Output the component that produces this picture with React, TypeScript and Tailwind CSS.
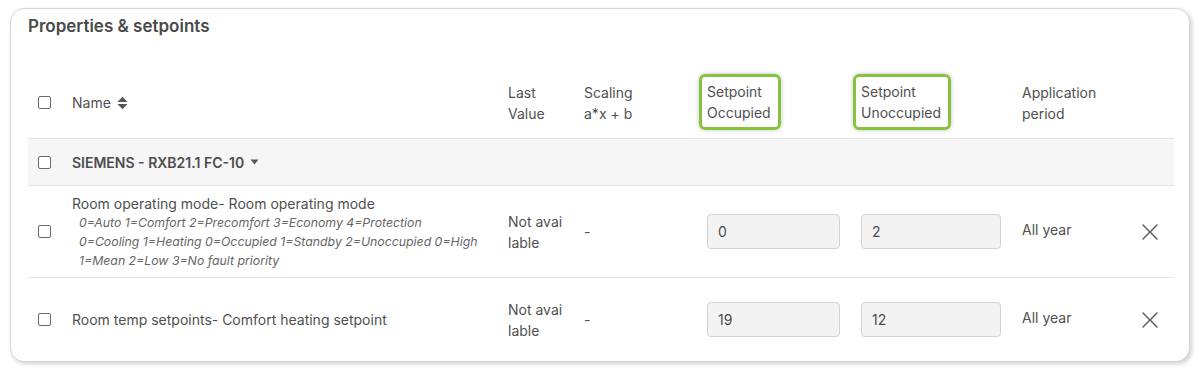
import React from "react";

const GRID =
  "grid grid-cols-[44px_436px_76px_123px_154px_161px_119px_33px] items-center";

function Checkbox() {
  return (
    <div className="ml-[10px] h-[13px] w-[13px] rounded-[2px] border-[1.5px] border-[#6b6b6b] bg-white" />
  );
}

function SortIcon() {
  return (
    <svg width="11" height="14" viewBox="0 0 11 14" className="ml-[6px]">
      <path d="M0.5 6 L5.5 0.8 L10.5 6 Z" fill="#555" />
      <path d="M0.5 8 L10.5 8 L5.5 13.2 Z" fill="#555" />
    </svg>
  );
}

function Caret() {
  return (
    <svg width="9" height="6" viewBox="0 0 9 6" className="ml-[6px]">
      <path d="M0.5 0.5 L8.5 0.5 L4.5 5.5 Z" fill="#555" />
    </svg>
  );
}

function XIcon() {
  return (
    <svg width="16" height="16" viewBox="0 0 16 16" className="ml-[1px]">
      <path d="M1 1 L15 15 M15 1 L1 15" stroke="#555" strokeWidth="1.4" strokeLinecap="round" />
    </svg>
  );
}

function Highlight({ children }: { children: React.ReactNode }) {
  return (
    <div className="-ml-[8px] -mt-[1px] inline-block rounded-[6px] border-[3px] border-[#86c440] py-[4px] pl-[5px] pr-[7px] shadow-[0_0_4px_rgba(0,0,0,0.25)]">
      {children}
    </div>
  );
}

function Input({ value, w }: { value: string; w: string }) {
  return (
    <div
      className={`flex h-[35px] items-center rounded-[4px] border border-[#d3d3d3] bg-[#f3f3f3] pl-[10px] text-[14px] text-[#4d4d4d] ${w}`}
    >
      {value}
    </div>
  );
}

export default function App() {
  return (
    <div
      className="h-[374px] w-[1202px] bg-white pl-[10px] pt-[8px]"
      style={{ fontFamily: "Inter, 'Noto Sans', sans-serif" }}
    >
      <div className="h-[354px] w-[1180px] overflow-hidden rounded-[14px] border border-[#d6d6d6] bg-white pl-[17px] pt-[5px] shadow-[2px_2px_4px_rgba(0,0,0,0.18)]">
        <div className="text-[17px] font-semibold leading-[24px] text-[#4a4a4a]">
          Properties &amp; setpoints
        </div>
        <div className="mt-[29px] w-[1146px] text-[14px] text-[#505050]">
          {/* header */}
          <div className={`${GRID} h-[72px] border-b border-[#e6e6e6] leading-[21px]`}>
            <Checkbox />
            <div className="flex items-center">
              Name
              <SortIcon />
            </div>
            <div>
              Last
              <br />
              Value
            </div>
            <div>
              Scaling
              <br />a*x + b
            </div>
            <div>
              <Highlight>
                Setpoint
                <br />
                Occupied
              </Highlight>
            </div>
            <div>
              <Highlight>
                Setpoint
                <br />
                Unoccupied
              </Highlight>
            </div>
            <div>
              Application
              <br />
              period
            </div>
            <div />
          </div>
          {/* group row */}
          <div className={`${GRID} h-[47px] border-b border-[#e3e3e3] bg-[#f6f6f6]`}>
            <Checkbox />
            <div className="col-span-7 flex items-center text-[14px] font-semibold text-[#4d4d4d]">
              SIEMENS - RXB21.1 FC-10
              <Caret />
            </div>
          </div>
          {/* row 1 */}
          <div className={`${GRID} h-[92px] border-b border-[#e6e6e6]`}>
            <Checkbox />
            <div className="leading-[19px]">
              <div className="text-[14px]">Room operating mode- Room operating mode</div>
              <div className="ml-[7px] text-[12.3px] italic text-[#666]">
                0=Auto 1=Comfort 2=Precomfort 3=Economy 4=Protection
                <br />
                0=Cooling 1=Heating 0=Occupied 1=Standby 2=Unoccupied 0=High
                <br />
                1=Mean 2=Low 3=No fault priority
              </div>
            </div>
            <div className="leading-[21px]">
              Not avai
              <br />
              lable
            </div>
            <div>-</div>
            <Input value="0" w="w-[133px]" />
            <Input value="2" w="w-[140px]" />
            <div className="-mt-[5px]">All year</div>
            <XIcon />
          </div>
          {/* row 2 */}
          <div className={`${GRID} h-[84px] border-b border-[#e6e6e6]`}>
            <Checkbox />
            <div>Room temp setpoints- Comfort heating setpoint</div>
            <div className="leading-[21px]">
              Not avai
              <br />
              lable
            </div>
            <div>-</div>
            <Input value="19" w="w-[133px]" />
            <Input value="12" w="w-[140px]" />
            <div className="-mt-[5px]">All year</div>
            <XIcon />
          </div>
        </div>
      </div>
    </div>
  );
}
